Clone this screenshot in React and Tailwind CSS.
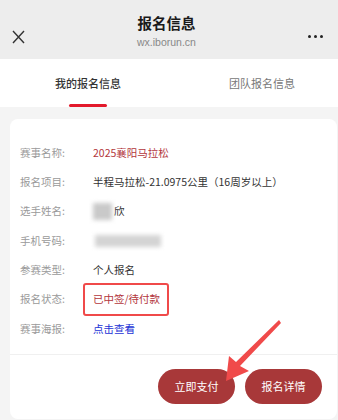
import React from 'react';

const font = { fontFamily: '"Noto Sans CJK SC", "Noto Sans", sans-serif' };

function Row({ label, children }) {
    return (
        <div className="flex items-center h-[29.3px]">
            <div className="w-[73px] shrink-0 text-[10.5px] text-[#9a9a9a]">{label}</div>
            <div className="text-[10.5px] text-[#333] flex items-center">{children}</div>
        </div>
    );
}

export default function App() {
    return (
        <div className="relative w-[338px] h-[420px] overflow-hidden bg-[#f4f4f4]" style={font}>
            {/* title bar */}
            <div className="h-[59px] bg-[#ededed] flex items-center px-[12px]">
                <svg width="13" height="14" viewBox="0 0 13 14" className="mt-[14px]">
                    <path d="M1 1 L12 13 M12 1 L1 13" stroke="#333" strokeWidth="1.4" fill="none" />
                </svg>
                <div className="flex-1 flex flex-col items-center pt-[2px]">
                    <div className="text-[14.5px] font-bold text-[#1a1a1a] leading-[18px]">报名信息</div>
                    <div className="text-[10.5px] text-[#888] mt-[4px] leading-[12px]" style={{ fontFamily: '"Liberation Sans", sans-serif' }}>wx.iborun.cn</div>
                </div>
                <div className="flex gap-[3px] mt-[14px] mr-[3px]">
                    <span className="w-[3px] h-[3px] rounded-full bg-[#222]" />
                    <span className="w-[3px] h-[3px] rounded-full bg-[#222]" />
                    <span className="w-[3px] h-[3px] rounded-full bg-[#222]" />
                </div>
            </div>

            {/* tabs */}
            <div className="h-[48px] bg-white flex">
                <div className="w-[176px] flex flex-col items-center">
                    <div className="text-[11px] font-medium text-[#333] mt-[16px] leading-[16px]">我的报名信息</div>
                    <div className="w-[38px] h-[3px] rounded-full bg-[#e3192b] mt-[13px]" />
                </div>
                <div className="w-[152px] ml-[10px] flex flex-col items-center">
                    <div className="text-[11px] text-[#777] mt-[16px] leading-[16px]">团队报名信息</div>
                </div>
            </div>

            {/* card */}
            <div className="mt-[12px] ml-[10px] mr-[1px] bg-white rounded-[8px] h-[300px]">
                <div className="px-[10px] pt-[19px] pb-[11px] border-b border-[#f0f0f0]">
                    <Row label="赛事名称:">
                        <span className="text-[#b3363c]">2025襄阳马拉松</span>
                    </Row>
                    <Row label="报名项目:">半程马拉松-21.0975公里（16周岁以上）</Row>
                    <Row label="选手姓名:">
                        <span className="w-[19px] h-[17px] bg-[#c9c9c9] blur-[2px] mr-[2px]" />
                        <span>欣</span>
                    </Row>
                    <Row label="手机号码:">
                        <span className="w-[66px] h-[12px] bg-[#d4d4d4] blur-[2px] ml-[2px]" />
                    </Row>
                    <Row label="参赛类型:">个人报名</Row>
                    <Row label="报名状态:">
                        <span className="relative text-[#b3363c]">
                            已中签/待付款
                            <span className="absolute left-[-10px] right-[-9px] top-[-8px] bottom-[-9px] border-2 border-[#f04a4a] rounded-[3px]" />
                        </span>
                    </Row>
                    <Row label="赛事海报:">
                        <span className="text-[#1c33d6]">点击查看</span>
                    </Row>
                </div>
                <div className="flex justify-end gap-[10px] pr-[15px] pt-[14px]">
                    <button className="w-[77px] h-[35px] rounded-full bg-[#a83839] text-white text-[11px]">立即支付</button>
                    <button className="w-[77px] h-[35px] rounded-full bg-[#a83839] text-white text-[11px]">报名详情</button>
                </div>
            </div>

            {/* annotation arrow */}
            <svg className="absolute left-0 top-0 pointer-events-none" width="338" height="420" viewBox="0 0 338 420">
                <polygon
                    points="226,381 229,356 236,362 279,320 281,323 240,366 249,371"
                    fill="#f04a4a"
                />
            </svg>
        </div>
    );
}
